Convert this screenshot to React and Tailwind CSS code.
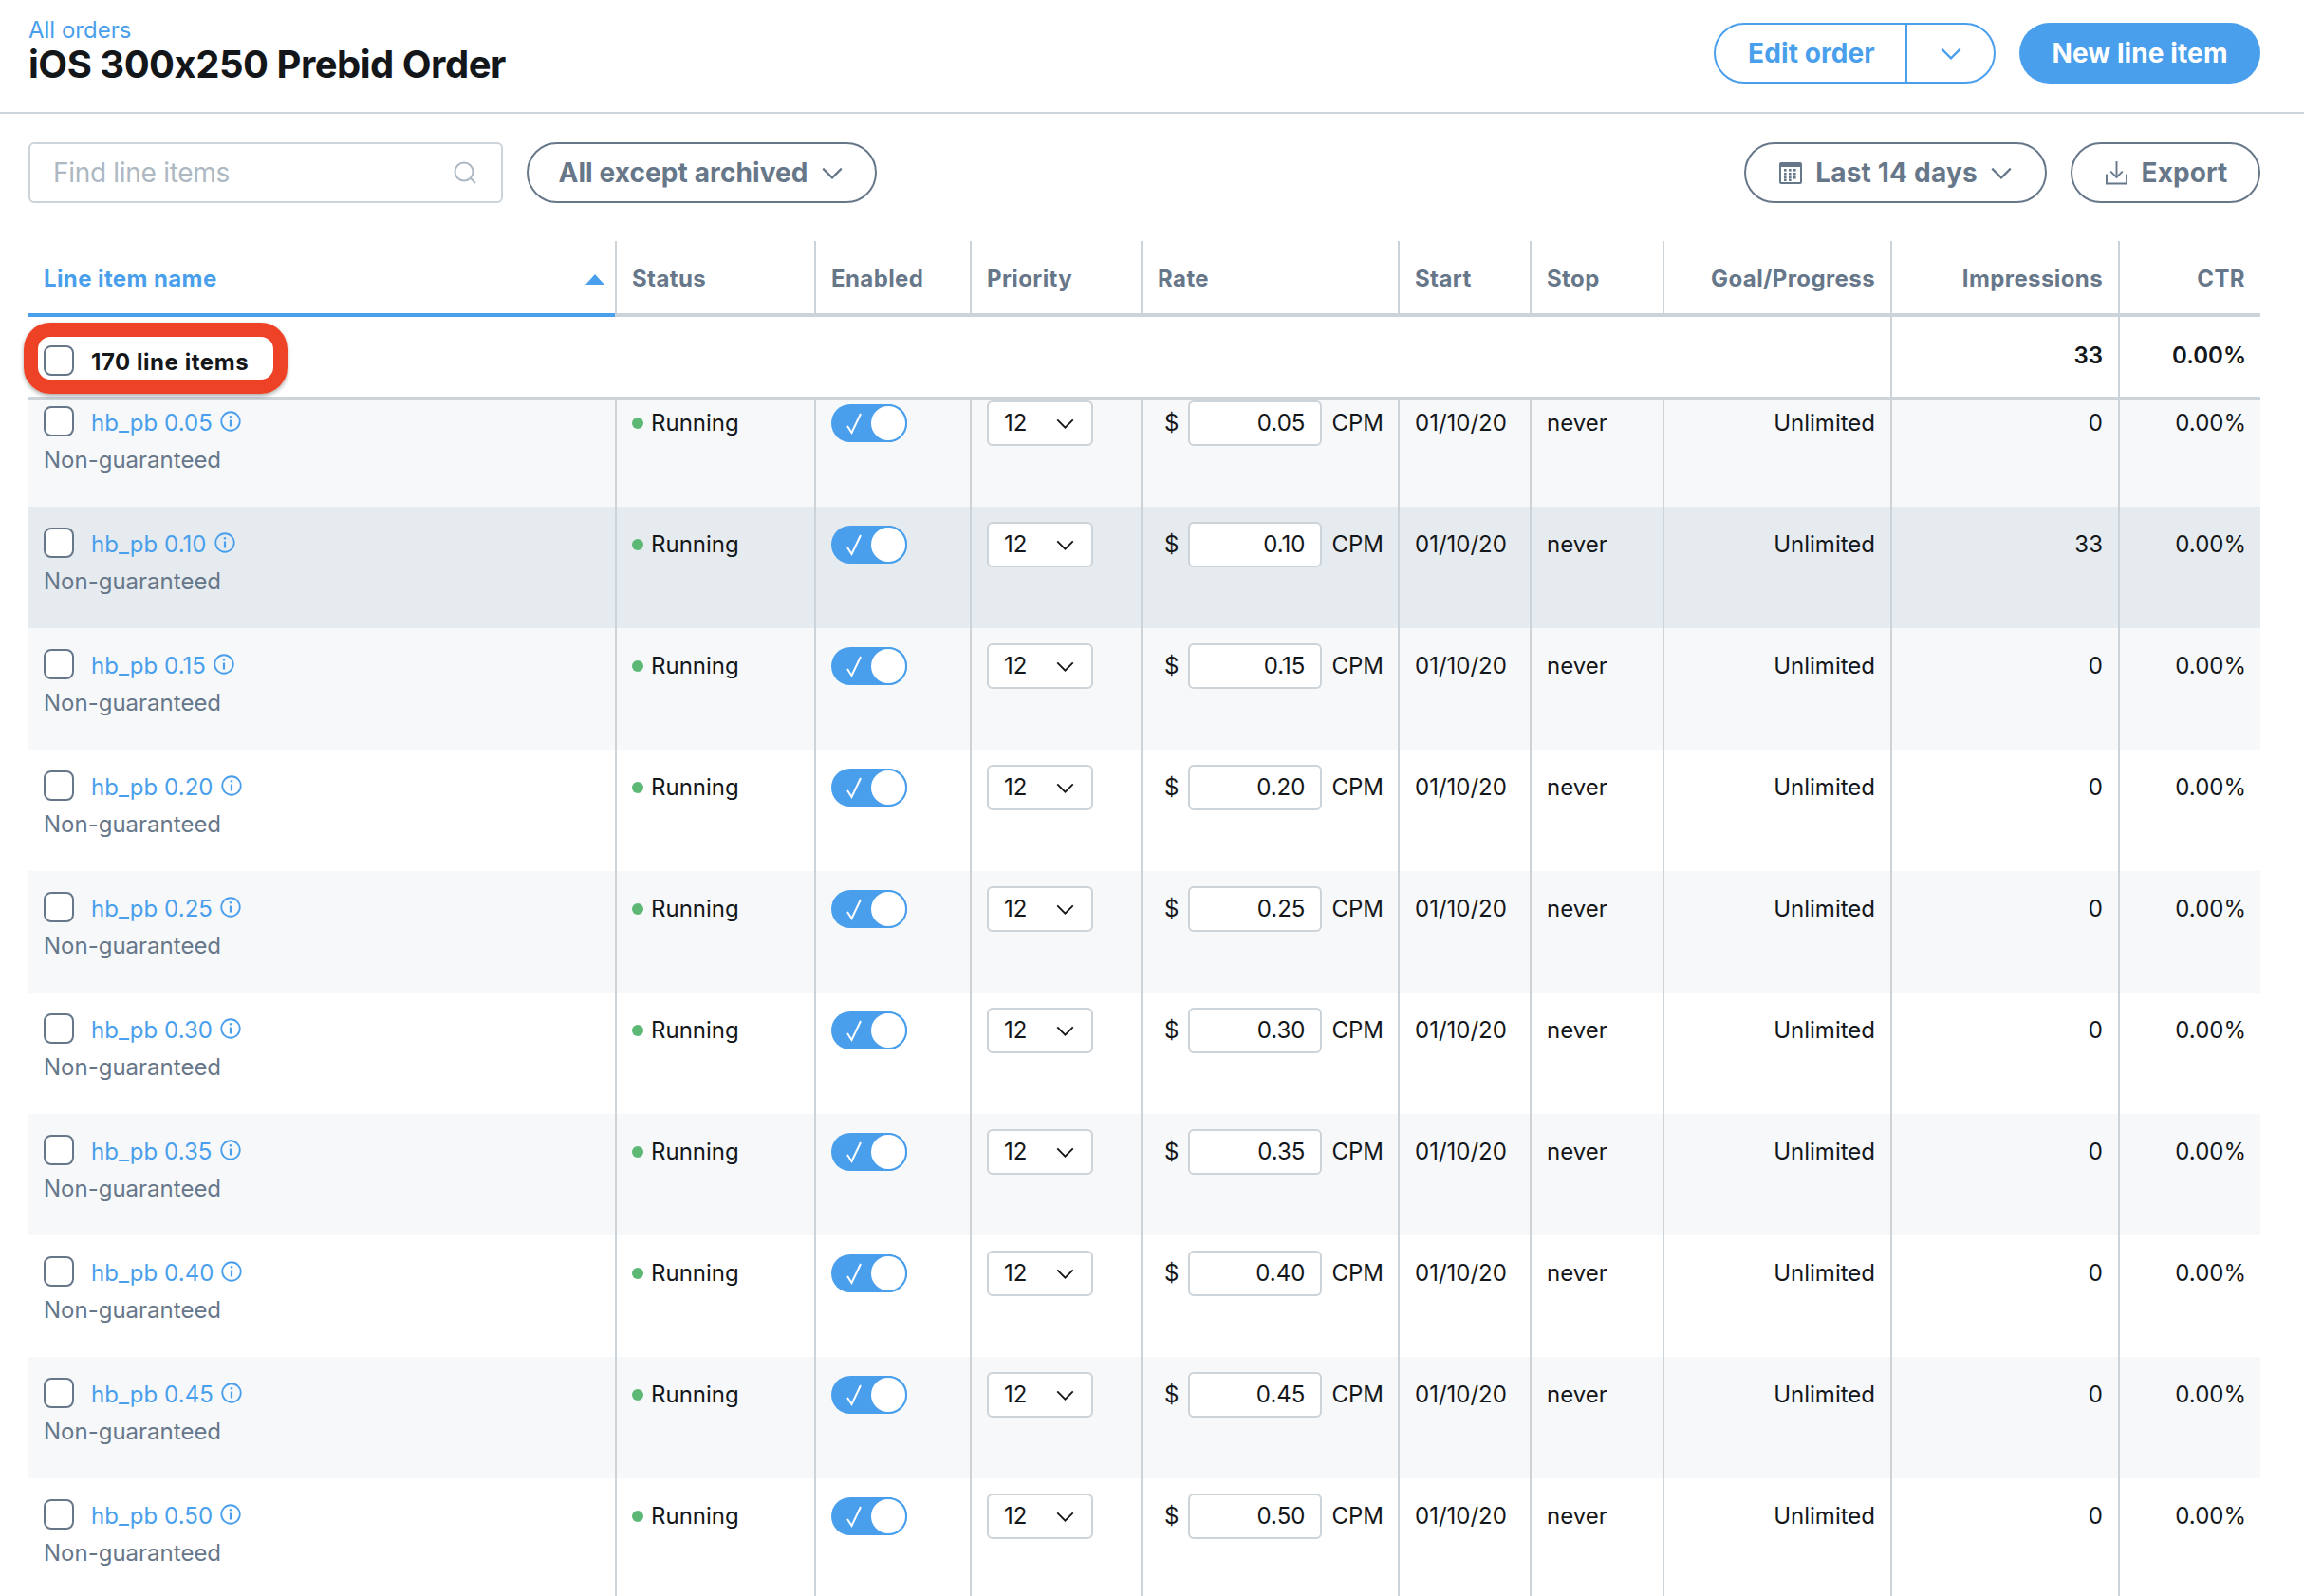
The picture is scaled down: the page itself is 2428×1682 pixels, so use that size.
const rows = [
  { name: 'hb_pb 0.05', rate: '0.05', impressions: '0', bg: 'bg-[#f6f8fa]' },
  { name: 'hb_pb 0.10', rate: '0.10', impressions: '33', bg: 'bg-[#e6ebef]' },
  { name: 'hb_pb 0.15', rate: '0.15', impressions: '0', bg: 'bg-[#f6f8fa]' },
  { name: 'hb_pb 0.20', rate: '0.20', impressions: '0', bg: 'bg-white' },
  { name: 'hb_pb 0.25', rate: '0.25', impressions: '0', bg: 'bg-[#f6f8fa]' },
  { name: 'hb_pb 0.30', rate: '0.30', impressions: '0', bg: 'bg-white' },
  { name: 'hb_pb 0.35', rate: '0.35', impressions: '0', bg: 'bg-[#f6f8fa]' },
  { name: 'hb_pb 0.40', rate: '0.40', impressions: '0', bg: 'bg-white' },
  { name: 'hb_pb 0.45', rate: '0.45', impressions: '0', bg: 'bg-[#f6f8fa]' },
  { name: 'hb_pb 0.50', rate: '0.50', impressions: '0', bg: 'bg-white' },
];

const gridCols = 'grid grid-cols-[618px_210px_164px_180px_271px_139px_140px_240px_240px_150px]';
const cell = 'border-l-2 border-[#ccd3d9] pl-[15px] pr-[16px]';
const cellLeft = 'border-l-2 border-[#ccd3d9] pl-[16px] pr-[15px]';

function Chevron({ className }) {
  return (
    <svg viewBox="0 0 20 12" fill="none" stroke="currentColor" strokeWidth="2" className={className}>
      <path d="M1 1.5 L10 10.5 L19 1.5" />
    </svg>
  );
}

function Checkbox() {
  return <div className="w-[32px] h-[32px] shrink-0 rounded-[8px] border-2 border-[#67778a] bg-white" />;
}

function InfoIcon() {
  return (
    <svg viewBox="0 0 22 22" fill="none" stroke="#4a9fec" className="w-[22px] h-[22px] shrink-0">
      <circle cx="11" cy="11" r="9.75" strokeWidth="1.8" />
      <path d="M11 9.5 V16.5" strokeWidth="2.2" />
      <path d="M11 5.2 V7.4" strokeWidth="2.4" />
    </svg>
  );
}

function SearchIcon() {
  return (
    <svg viewBox="0 0 24 24" fill="none" stroke="#adb8c2" strokeWidth="2" className="w-[24px] h-[24px] shrink-0">
      <circle cx="11" cy="11" r="9.5" />
      <path d="M17.8 17.8 L23 23" />
    </svg>
  );
}

function CalendarIcon() {
  return (
    <svg viewBox="0 0 24 24" className="w-[24px] h-[24px] shrink-0" fill="#67778a">
      <path fillRule="evenodd" d="M2 1 H22 A2 2 0 0 1 24 3 V22 A2 2 0 0 1 22 24 H2 A2 2 0 0 1 0 22 V3 A2 2 0 0 1 2 1 Z M2 6 V22 H22 V6 Z" />
      {[5, 10, 15].map((x) => [8, 12, 16].map((y) => <rect key={`${x}-${y}`} x={x} y={y} width="2.6" height="2.6" />))}
      <rect x="5" y="19" width="2.6" height="2" />
      <rect x="10" y="19" width="2.6" height="2" />
    </svg>
  );
}

function DownloadIcon() {
  return (
    <svg viewBox="0 0 24 26" fill="none" stroke="#67778a" strokeWidth="2" className="w-[23px] h-[25px] shrink-0">
      <path d="M12 0 V17" />
      <path d="M5.5 11 L12 17.5 L18.5 11" />
      <path d="M1 14 V24.5 H23 V14" />
    </svg>
  );
}

function Toggle() {
  return (
    <div className="w-[80px] h-[40px] rounded-full bg-[#4a9fec] relative flex items-center">
      <svg viewBox="0 0 18 26" fill="none" stroke="white" strokeWidth="2" className="w-[18px] h-[26px] ml-[15px]">
        <path d="M2 16 L6.5 23 L16 3" />
      </svg>
      <div className="absolute right-0 top-0 w-[40px] h-[40px] rounded-full bg-white border-2 border-[#4a9fec]" />
    </div>
  );
}

function Row({ row }) {
  return (
    <div className={`${gridCols} h-[128px] text-[24px] leading-[32px] text-[#14171a] ${row.bg}`}>
      <div className="pl-[16px] pr-[16px]">
        <div className="flex items-center mt-[22px] h-[32px]">
          <Checkbox />
          <a className="ml-[18px] mt-[3px] tracking-[0.05px] text-[#4a9fec]">{row.name}</a>
          <span className="ml-[8px] -mt-[1px]"><InfoIcon /></span>
        </div>
        <div className="text-[#67778a] mt-[9px]">Non-guaranteed</div>
      </div>
      <div className={cellLeft}>
        <div className="flex items-center mt-[24px]">
          <span className="w-[12px] h-[12px] rounded-full bg-[#5cb874] mr-[8px]" />
          Running
        </div>
      </div>
      <div className={cellLeft}>
        <div className="mt-[20px]"><Toggle /></div>
      </div>
      <div className={cellLeft}>
        <div className="mt-[16px] w-[112px] h-[48px] box-border rounded-[6px] border-2 border-[#ccd3d9] bg-white flex items-center justify-between pl-[16px] pr-[18px]">
          <span>12</span>
          <Chevron className="w-[19px] h-[11px] text-[#14171a]" />
        </div>
      </div>
      <div className="border-l-2 border-[#ccd3d9] pl-[23px] pr-[15px] flex items-start">
        <span className="mt-[24px]">$</span>
        <div className="mt-[16px] ml-[10px] w-[141px] h-[48px] box-border rounded-[6px] border-2 border-[#ccd3d9] bg-white flex items-center justify-end pr-[16px]">
          {row.rate}
        </div>
        <span className="mt-[24px] ml-[10px]">CPM</span>
      </div>
      <div className={cellLeft}><div className="mt-[24px]">01/10/20</div></div>
      <div className={cellLeft}><div className="mt-[24px]">never</div></div>
      <div className={`${cell} text-right`}><div className="mt-[24px]">Unlimited</div></div>
      <div className={`${cell} text-right`}><div className="mt-[24px]">{row.impressions}</div></div>
      <div className="border-l-2 border-[#ccd3d9] px-[15px] text-right"><div className="mt-[24px]">0.00%</div></div>
    </div>
  );
}

function HeaderCell({ label, right }) {
  return (
    <div className={`border-l-2 border-b-4 border-[#ccd3d9] pl-[16px] pr-[16px] pt-[3px] flex items-center ${right ? 'justify-end' : ''}`}>
      {label}
    </div>
  );
}

export default function App() {
  return (
    <div className="w-[2428px] h-[1682px] overflow-hidden flex flex-col bg-white font-['Inter',sans-serif] [font-feature-settings:'calt'_0]">
      <div className="h-[120px] shrink-0 box-border border-b-2 border-[#ccd3d9] flex items-start justify-between pl-[30px] pr-[46px]">
        <div className="pt-[16px]">
          <a className="block text-[24px] leading-[32px] text-[#4a9fec]">All orders</a>
          <h1 className="text-[40px] leading-[40px] font-bold tracking-[-0.5px] text-[#14171a]">iOS 300x250 Prebid Order</h1>
        </div>
        <div className="flex items-center pt-[24px] gap-[25px]">
          <div className="flex h-[64px] w-[297px] box-border rounded-full border-2 border-[#4a9fec] text-[#4a9fec] text-[28px] font-bold tracking-[0.1px]">
            <div className="w-[200px] flex items-center justify-center pl-[2px]">Edit order</div>
            <div className="flex-1 border-l-2 border-[#4a9fec] flex items-center justify-center">
              <Chevron className="w-[22px] h-[13px]" />
            </div>
          </div>
          <div className="h-[64px] w-[254px] rounded-full bg-[#4a9fec] text-white text-[28px] font-bold tracking-[0.1px] flex items-center justify-center">
            New line item
          </div>
        </div>
      </div>

      <div className="shrink-0 flex items-center justify-between pl-[30px] pr-[46px] pt-[30px]">
        <div className="flex gap-[25px]">
          <div className="w-[500px] h-[64px] box-border rounded-[6px] border-2 border-[#ccd3d9] flex items-center justify-between pl-[24px] pr-[26px]">
            <span className="text-[28px] tracking-[-0.3px] text-[#adb8c2]">Find line items</span>
            <SearchIcon />
          </div>
          <div className="w-[369px] h-[64px] box-border rounded-full border-2 border-[#67778a] text-[#67778a] text-[28px] font-bold tracking-[0.1px] flex items-center justify-center gap-[14px] pr-[3px]">
            All except archived
            <Chevron className="w-[22px] h-[13px]" />
          </div>
        </div>
        <div className="flex gap-[25px]">
          <div className="w-[319px] h-[64px] box-border rounded-full border-2 border-[#67778a] text-[#67778a] text-[28px] font-bold tracking-[0.2px] flex items-center justify-center gap-[14px]">
            <CalendarIcon />
            Last 14 days
            <Chevron className="w-[22px] h-[13px]" />
          </div>
          <div className="w-[200px] h-[64px] box-border rounded-full border-2 border-[#67778a] text-[#67778a] text-[28px] font-bold tracking-[0.1px] flex items-center justify-center gap-[15px] pl-[2px]">
            <DownloadIcon />
            Export
          </div>
        </div>
      </div>

      <div className="relative mt-[40px] ml-[30px] w-[2352px] flex-1 flex flex-col min-h-0">
        <div className={`${gridCols} h-[80px] shrink-0 text-[24px] font-bold tracking-[0.4px] text-[#67778a]`}>
          <div className="border-b-4 border-[#4a9fec] pl-[16px] pr-[11px] pt-[3px] flex items-center justify-between text-[#4a9fec]">
            Line item name
            <svg viewBox="0 0 20 11" className="w-[20px] h-[11px] mt-[1px]" fill="#4a9fec">
              <path d="M10 0 L20 11 H0 Z" />
            </svg>
          </div>
          <HeaderCell label="Status" />
          <HeaderCell label="Enabled" />
          <HeaderCell label="Priority" />
          <HeaderCell label="Rate" />
          <HeaderCell label="Start" />
          <HeaderCell label="Stop" />
          <HeaderCell label="Goal/Progress" right />
          <HeaderCell label="Impressions" right />
          <HeaderCell label="CTR" right />
        </div>

        <div className="h-[88px] shrink-0 box-border border-b-4 border-[#ccd3d9] flex text-[24px] leading-[32px] font-semibold text-[#14171a]">
          <div className="flex-1 pl-[16px] pt-[30px] flex items-start">
            <Checkbox />
            <span className="ml-[18px] mt-[2px] font-bold tracking-[0.55px]">170 line items</span>
          </div>
          <div className="w-[240px] box-border border-l-2 border-[#ccd3d9] pl-[16px] pr-[16px] pt-[25px] text-right">33</div>
          <div className="w-[150px] box-border border-l-2 border-[#ccd3d9] pl-[16px] pr-[15px] pt-[25px] text-right">0.00%</div>
        </div>

        <div className="absolute left-[-5px] top-[86px] w-[278px] h-[75px] box-border rounded-[28px] border-[15px] border-[#ee4226] shadow-[0_2px_4px_rgba(0,0,0,0.35)] pointer-events-none" />

        <div className="flex-1 min-h-0 overflow-hidden">
          <div className="-mt-[16px]">
            {rows.map((row) => <Row key={row.name} row={row} />)}
          </div>
        </div>
      </div>
    </div>
  );
}
